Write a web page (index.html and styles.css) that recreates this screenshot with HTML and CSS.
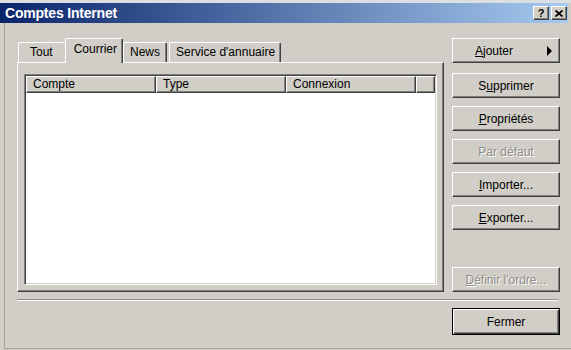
FILE: index.html
```html
<!DOCTYPE html>
<html lang="fr">
<head>
    <meta charset="UTF-8">
    <title>Comptes Internet</title>
    <link rel="stylesheet" href="styles.css">
</head>
<body>
    <div class="window">
        <div class="top-strip"></div>
        <div class="titlebar">
            <span class="title">Comptes Internet</span>
            <div class="caption-btns">
                <span class="cap-btn help">?</span>
                <span class="cap-btn">
                    <svg width="8" height="7" viewBox="0 0 8 7">
                        <path d="M0.5 0.5 L7.5 6.5 M7.5 0.5 L0.5 6.5" stroke="#000" stroke-width="1.8" fill="none"/>
                    </svg>
                </span>
            </div>
        </div>
        <div class="client">
            <div class="main">
                <div class="left">
                    <div class="tabs">
                        <div class="tab tab-first">Tout</div>
                        <div class="tab active">Courrier</div>
                        <div class="tab">News</div>
                        <div class="tab tab-long">Service d'annuaire</div>
                    </div>
                    <div class="panel">
                        <div class="list">
                            <div class="list-head">
                                <div class="col">Compte</div>
                                <div class="col">Type</div>
                                <div class="col">Connexion</div>
                                <div class="col col-rest"></div>
                            </div>
                        </div>
                    </div>
                </div>
                <div class="right">
                    <button class="btn btn-menu"><span><u>A</u>jouter</span><span class="arrow"></span></button>
                    <button class="btn btn-gap">S<u>u</u>pprimer</button>
                    <button class="btn"><u>P</u>ropriétés</button>
                    <button class="btn disabled">Par défaut</button>
                    <button class="btn"><u>I</u>mporter...</button>
                    <button class="btn"><u>E</u>xporter...</button>
                    <button class="btn disabled btn-bottom"><u>D</u>éfinir l'ordre...</button>
                </div>
            </div>
            <div class="separator"></div>
            <div class="footer">
                <button class="btn default">Fermer</button>
            </div>
        </div>
    </div>
</body>
</html>
```

FILE: styles.css
```css
body {
    margin: 0;
    padding: 0;
    background-color: #d0cec7;
    font-family: "Liberation Sans", Arial, sans-serif;
    font-size: 12px;
    color: #000000;
}
.window {
    width: 571px;
    height: 350px;
    display: flex;
    flex-direction: column;
    background-color: #d0cec7;
    overflow: hidden;
}
.top-strip {
    height: 3px;
    background-color: #dcdfe2;
}
.titlebar {
    height: 20px;
    margin-right: 3px;
    display: flex;
    align-items: center;
    padding-left: 5px;
    background: linear-gradient(to right, #0a246a, #a6caf0);
}
.title {
    color: #ffffff;
    font-weight: bold;
    font-size: 14px;
    letter-spacing: -0.2px;
}
.caption-btns {
    margin-left: auto;
    display: flex;
    gap: 2px;
    padding-right: 1px;
}
.cap-btn {
    width: 16px;
    height: 14px;
    box-sizing: border-box;
    display: flex;
    align-items: center;
    justify-content: center;
    background-color: #d4d0c8;
    border: 1px solid;
    border-color: #ffffff #404040 #404040 #ffffff;
    box-shadow: inset -1px -1px #808080;
}
.cap-btn.help {
    font-weight: bold;
    font-size: 11px;
    line-height: 12px;
}
.client {
    flex: 1;
    margin-left: 4px;
    margin-bottom: 1px;
    border-left: 1px solid #a4a29c;
    border-bottom: 1px solid #a4a29c;
    display: flex;
    flex-direction: column;
}
.main {
    display: flex;
    padding: 13px 0 0 12px;
    gap: 8px;
}
.left {
    width: 427px;
    display: flex;
    flex-direction: column;
}
.tabs {
    height: 26px;
    display: flex;
    align-items: flex-end;
    padding-left: 1px;
    position: relative;
    z-index: 1;
}
.tab {
    height: 20px;
    box-sizing: border-box;
    padding: 0 6px;
    margin-left: 1px;
    line-height: 18px;
    border-top: 1px solid #ffffff;
    border-left: 1px solid #ffffff;
    border-right: 1px solid #404040;
    box-shadow: inset -1px 0 #808080;
    border-radius: 2px 2px 0 0;
}
.tab-first {
    margin-left: 0;
    padding: 0 13px 0 11px;
}
.tab-long {
    margin-left: 2px;
    padding: 0 5px 0 6px;
}
.tab.active {
    height: 25px;
    margin: 0 -1px -1px -2px;
    padding: 0 5px 0 8px;
    line-height: 20px;
    background-color: #d0cec7;
}
.panel {
    height: 230px;
    box-sizing: border-box;
    border: 1px solid;
    border-color: #ffffff #404040 #404040 #ffffff;
    box-shadow: inset -1px -1px #808080;
    padding: 11px 0 0 6px;
}
.list {
    width: 413px;
    height: 211px;
    box-sizing: border-box;
    background-color: #ffffff;
    border: 1px solid;
    border-color: #808080 #ffffff #ffffff #808080;
    box-shadow: inset 1px 1px #404040, inset -1px -1px #d4d0c8;
    padding: 1px;
}
.list-head {
    display: flex;
    height: 17px;
}
.col {
    width: 130px;
    box-sizing: border-box;
    padding-left: 6px;
    line-height: 15px;
    background-color: #d0cec7;
    border: 1px solid;
    border-color: #ffffff #404040 #404040 #ffffff;
    box-shadow: inset -1px -1px #808080;
}
.col-rest {
    flex: 1;
    width: auto;
}
.right {
    width: 108px;
    display: flex;
    flex-direction: column;
    gap: 8px;
    padding-top: 2px;
}
.btn {
    width: 108px;
    height: 25px;
    box-sizing: border-box;
    padding: 0;
    font-family: "Liberation Sans", Arial, sans-serif;
    font-size: 12px;
    color: #000000;
    background-color: #d0cec7;
    border: 1px solid;
    border-color: #ffffff #404040 #404040 #ffffff;
    box-shadow: inset -1px -1px #808080;
    display: flex;
    align-items: center;
    justify-content: center;
}
.btn-menu {
    justify-content: space-between;
    padding: 0 7px 0 22px;
}
.arrow {
    width: 0;
    height: 0;
    border-top: 5px solid transparent;
    border-bottom: 5px solid transparent;
    border-left: 5px solid #000000;
}
.btn-gap {
    margin-top: 2px;
}
.btn-bottom {
    margin-top: auto;
}
.disabled {
    color: #8e8c86;
    text-shadow: 1px 1px #ffffff;
}
.separator {
    margin: 7px 13px 0 12px;
    border-top: 1px solid #8e8c86;
    border-bottom: 1px solid #ffffff;
}
.footer {
    display: flex;
    justify-content: flex-end;
    padding-right: 11px;
    margin-top: 7px;
}
.default {
    height: 27px;
    border: 1px solid #000000;
    box-shadow: inset 1px 1px #ffffff, inset -1px -1px #404040, inset -2px -2px #808080;
}
```
